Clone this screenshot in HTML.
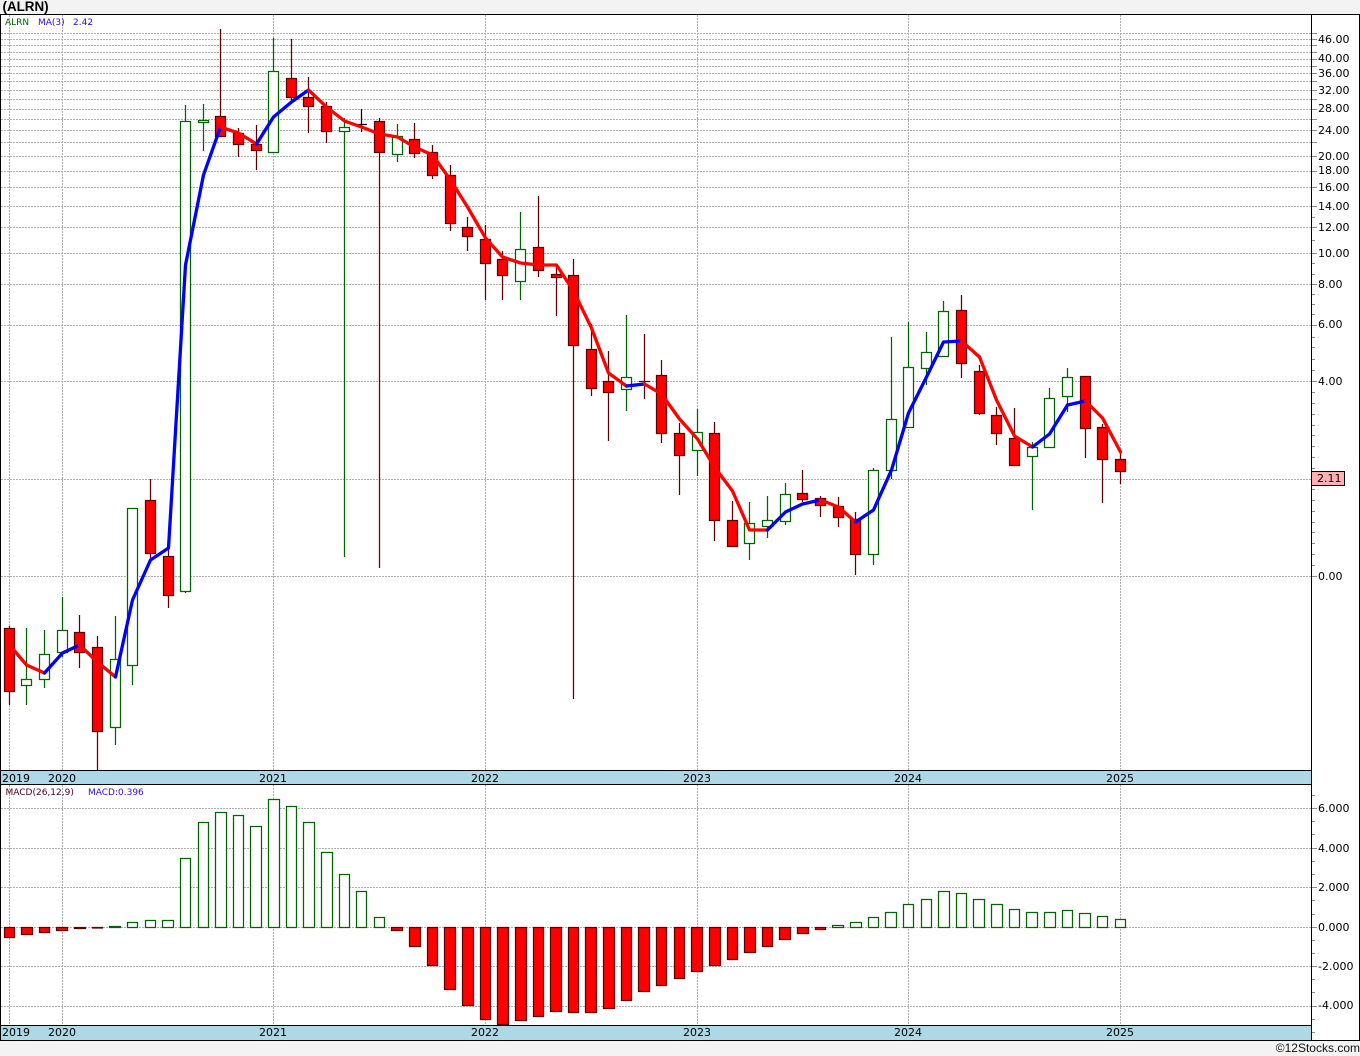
<!DOCTYPE html>
<html><head><meta charset="utf-8"><title>ALRN</title>
<style>
html,body{margin:0;padding:0;background:#f3f3f3}
svg{display:block}
text{font-family:"DejaVu Sans",sans-serif;font-size:11px;fill:#000}
.s text{font-size:9px}
.g{stroke:#b0b0b0;stroke-width:1;stroke-dasharray:2 1;fill:none}
.t{stroke:#8a8a8a;stroke-width:1;fill:none}
.gw{stroke:#006400;stroke-width:1.25;fill:none}
.rw{stroke:#600000;stroke-width:1.25;fill:none}
.gb rect{fill:#fff;stroke:#006400;stroke-width:1.25}
.rb rect{fill:#f00;stroke:#600000;stroke-width:1.25}
.ma{fill:none;stroke-width:3.3;stroke-linejoin:round;stroke-linecap:round}
</style></head><body>
<svg xmlns="http://www.w3.org/2000/svg" width="1360" height="1056" viewBox="0 0 1360 1056">
<rect width="1360" height="1056" fill="#f3f3f3"/>
<rect x="0" y="14" width="1360" height="1027" fill="#fff"/>
<text x="2.5" y="11" style="font:bold 13.4px 'Liberation Sans',sans-serif;fill:#000">(ALRN)</text>

<!-- horizontal grid top -->
<path class="g" d="M1 33.5H1311M1 39.5H1311M1 45.5H1311M1 52.5H1311M1 59.5H1311M1 66.5H1311M1 73.5H1311M1 81.5H1311M1 90.5H1311M1 99.5H1311M1 109.5H1311M1 119.5H1311M1 130.5H1311M1 142.5H1311M1 156.5H1311M1 171.5H1311M1 187.5H1311M1 206.5H1311M1 227.5H1311M1 253.5H1311M1 284.5H1311M1 325.5H1311M1 381.5H1311M1 479.5H1311M1 576.5H1311"/>
<!-- vertical grid -->
<path class="g" d="M9.5 15V770M62.5 15V770M273.5 15V770M485.5 15V770M697.5 15V770M908.5 15V770M1120.5 15V770M9.5 785V1025M62.5 785V1025M273.5 785V1025M485.5 785V1025M697.5 785V1025M908.5 785V1025M1120.5 785V1025"/>
<!-- macd grid -->
<path class="g" d="M1 808.5H1311M1 848.5H1311M1 887.5H1311M1 927.5H1311M1 966.5H1311M1 1006.5H1311"/>

<!-- axis ticks -->
<path class="t" d="M1312 33.5H1317M1312 39.5H1317M1312 45.5H1317M1312 52.5H1317M1312 59.5H1317M1312 66.5H1317M1312 73.5H1317M1312 81.5H1317M1312 90.5H1317M1312 99.5H1317M1312 109.5H1317M1312 119.5H1317M1312 130.5H1317M1312 142.5H1317M1312 156.5H1317M1312 171.5H1317M1312 187.5H1317M1312 206.5H1317M1312 227.5H1317M1312 253.5H1317M1312 284.5H1317M1312 325.5H1317M1312 381.5H1317M1312 576.5H1317
M1312 217.5H1315M1312 240.5H1315M1312 263.5H1315M1312 274.5H1315M1312 294.5H1315M1312 304.5H1315M1312 314.5H1315M1312 337.5H1315M1312 347.5H1315M1312 359.5H1315M1312 370.5H1315M1312 392.5H1315M1312 403.5H1315M1312 414.5H1315M1312 425.5H1315M1312 435.5H1315M1312 446.5H1315M1312 457.5H1315M1312 468.5H1315M1312 489.5H1315M1312 500.5H1315M1312 511.5H1315M1312 522.5H1315M1312 532.5H1315M1312 543.5H1315M1312 554.5H1315M1312 565.5H1315
M1312 808.5H1317M1312 848.5H1317M1312 887.5H1317M1312 927.5H1317M1312 966.5H1317M1312 1006.5H1317
M1312 795.5H1315M1312 821.5H1315M1312 834.5H1315M1312 861.5H1315M1312 874.5H1315M1312 900.5H1315M1312 914.5H1315M1312 940.5H1315M1312 953.5H1315M1312 979.5H1315M1312 992.5H1315M1312 1019.5H1315M1312 1032.5H1315"/>

<!-- wicks -->
<path class="gw" d="M26.5 628V705M44.5 630V688M62.5 597V657M115.5 616V745M132.5 508V685M185.5 105V593M203.5 104V151M273.5 38V153M344.5 118V557M397.5 124V162M520.5 212V300M626.5 315V411M697.5 409V476M749.5 502V560M767.5 496V538M785.5 483V525M873.5 468V565M891.5 337V479M908.5 322V427M926.5 332V385M943.5 301V356M1032.5 442V510M1049.5 388V447M1067.5 368V412"/>
<path class="rw" d="M9.5 626V705M79.5 615V668M97.5 636V770M150.5 479V558M168.5 548V608M220.5 29V137M238.5 128V157M256.5 125V170M291.5 39V102M308.5 77V133M326.5 102V143M379.5 118V568M414.5 123V158M432.5 145V179M450.5 165V231M467.5 217V251M485.5 225V300M502.5 251V300M538.5 196V277M556.5 267V316M573.5 259V699M591.5 324V396M608.5 351V441M644.5 334V399M639 381.5H650M661.5 360V443M679.5 423V495M714.5 422V541M732.5 501V546M802.5 470V502M820.5 496V517M838.5 497V527M855.5 512V575M961.5 295V378M979.5 365V415M996.5 407V445M1014.5 408V465M1085.5 376V458M1102.5 424V503M1120.5 452V484"/>
<path d="M361.5 109V132M356 124.5H367" stroke="#000" stroke-width="1.25" fill="none"/>

<!-- green bodies -->
<g class="gb">
<rect x="21.5" y="679.5" width="10" height="6"/>
<rect x="39.5" y="654.5" width="10" height="25"/>
<rect x="57.5" y="630.5" width="10" height="22"/>
<rect x="110.5" y="659.5" width="10" height="68"/>
<rect x="127.5" y="508.5" width="10" height="157"/>
<rect x="180.5" y="121.5" width="10" height="470"/>
<rect x="198.5" y="120.5" width="10" height="2"/>
<rect x="268.5" y="71.5" width="10" height="81"/>
<rect x="339.5" y="127.5" width="10" height="4"/>
<rect x="392.5" y="136.5" width="10" height="18"/>
<rect x="515.5" y="249.5" width="10" height="32"/>
<rect x="621.5" y="377.5" width="10" height="12"/>
<rect x="692.5" y="432.5" width="10" height="18"/>
<rect x="744.5" y="523.5" width="10" height="20"/>
<rect x="762.5" y="520.5" width="10" height="6"/>
<rect x="780.5" y="494.5" width="10" height="27"/>
<rect x="868.5" y="470.5" width="10" height="84"/>
<rect x="886.5" y="419.5" width="10" height="51"/>
<rect x="903.5" y="367.5" width="10" height="60"/>
<rect x="921.5" y="352.5" width="10" height="16"/>
<rect x="938.5" y="311.5" width="10" height="45"/>
<rect x="1027.5" y="447.5" width="10" height="9"/>
<rect x="1044.5" y="398.5" width="10" height="49"/>
<rect x="1062.5" y="377.5" width="10" height="19"/>
</g>
<!-- red bodies -->
<g class="rb">
<rect x="4.5" y="628.5" width="10" height="63"/>
<rect x="74.5" y="632.5" width="10" height="20"/>
<rect x="92.5" y="647.5" width="10" height="84"/>
<rect x="145.5" y="500.5" width="10" height="53"/>
<rect x="163.5" y="556.5" width="10" height="39"/>
<rect x="215.5" y="116.5" width="10" height="20"/>
<rect x="233.5" y="133.5" width="10" height="11"/>
<rect x="251.5" y="144.5" width="10" height="6"/>
<rect x="286.5" y="78.5" width="10" height="19"/>
<rect x="303.5" y="97.5" width="10" height="9"/>
<rect x="321.5" y="106.5" width="10" height="25"/>
<rect x="374.5" y="121.5" width="10" height="31"/>
<rect x="409.5" y="139.5" width="10" height="14"/>
<rect x="427.5" y="152.5" width="10" height="23"/>
<rect x="445.5" y="175.5" width="10" height="48"/>
<rect x="462.5" y="227.5" width="10" height="9"/>
<rect x="480.5" y="239.5" width="10" height="24"/>
<rect x="497.5" y="259.5" width="10" height="16"/>
<rect x="533.5" y="247.5" width="10" height="23"/>
<rect x="551.5" y="274.5" width="10" height="3"/>
<rect x="568.5" y="275.5" width="10" height="70"/>
<rect x="586.5" y="349.5" width="10" height="39"/>
<rect x="603.5" y="381.5" width="10" height="11"/>
<rect x="656.5" y="375.5" width="10" height="58"/>
<rect x="674.5" y="433.5" width="10" height="22"/>
<rect x="709.5" y="433.5" width="10" height="87"/>
<rect x="727.5" y="520.5" width="10" height="26"/>
<rect x="797.5" y="493.5" width="10" height="6"/>
<rect x="815.5" y="498.5" width="10" height="7"/>
<rect x="833.5" y="506.5" width="10" height="11"/>
<rect x="850.5" y="519.5" width="10" height="35"/>
<rect x="956.5" y="310.5" width="10" height="53"/>
<rect x="974.5" y="371.5" width="10" height="42"/>
<rect x="991.5" y="415.5" width="10" height="18"/>
<rect x="1009.5" y="438.5" width="10" height="27"/>
<rect x="1080.5" y="376.5" width="10" height="52"/>
<rect x="1097.5" y="427.5" width="10" height="32"/>
<rect x="1115.5" y="459.5" width="10" height="12"/>
</g>

<!-- moving average -->
<g class="ma">
<polyline stroke="#ff0000" points="9.5,645 26.5,665 44.5,673"/>
<polyline stroke="#0000ff" points="44.5,673 62.5,653 79.5,645"/>
<polyline stroke="#ff0000" points="79.5,645 97.5,662 115.5,677"/>
<polyline stroke="#0000ff" points="115.5,677 132.5,600 150.5,560 168.5,548 185.5,265 203.5,175 220.5,127"/>
<polyline stroke="#ff0000" points="220.5,127 238.5,133 256.5,144"/>
<polyline stroke="#0000ff" points="256.5,144 273.5,117 291.5,102 308.5,90"/>
<polyline stroke="#ff0000" points="308.5,90 326.5,107 344.5,121 361.5,127 379.5,134 397.5,137 414.5,147 432.5,155 450.5,180 467.5,207 485.5,238 502.5,257 520.5,263 538.5,265 556.5,265 573.5,291 591.5,328 608.5,373 626.5,386"/>
<polyline stroke="#0000ff" points="626.5,386 644.5,384"/>
<polyline stroke="#ff0000" points="644.5,384 661.5,394 679.5,419 697.5,439 714.5,467 732.5,491 749.5,530 767.5,530"/>
<polyline stroke="#0000ff" points="767.5,530 785.5,512 802.5,504 820.5,500"/>
<polyline stroke="#ff0000" points="820.5,500 838.5,507 855.5,522"/>
<polyline stroke="#0000ff" points="855.5,522 873.5,510 891.5,470 908.5,413 926.5,377 943.5,342 961.5,341"/>
<polyline stroke="#ff0000" points="961.5,341 979.5,357 996.5,400 1014.5,436 1032.5,447"/>
<polyline stroke="#0000ff" points="1032.5,447 1049.5,434 1067.5,405 1085.5,401"/>
<polyline stroke="#ff0000" points="1085.5,401 1102.5,418 1120.5,452"/>
</g>

<!-- MACD green -->
<g class="gb">
<rect x="109.5" y="926.5" width="11" height="1"/>
<rect x="127.5" y="922.5" width="10" height="5"/>
<rect x="145.5" y="920.5" width="10" height="7"/>
<rect x="162.5" y="920.5" width="11" height="7"/>
<rect x="180.5" y="858.5" width="10" height="69"/>
<rect x="198.5" y="822.5" width="10" height="105"/>
<rect x="215.5" y="812.5" width="11" height="115"/>
<rect x="233.5" y="815.5" width="10" height="112"/>
<rect x="250.5" y="826.5" width="11" height="101"/>
<rect x="268.5" y="799.5" width="11" height="128"/>
<rect x="286.5" y="806.5" width="10" height="121"/>
<rect x="303.5" y="822.5" width="11" height="105"/>
<rect x="321.5" y="852.5" width="11" height="75"/>
<rect x="339.5" y="874.5" width="10" height="53"/>
<rect x="356.5" y="891.5" width="10" height="36"/>
<rect x="374.5" y="917.5" width="10" height="10"/>
<rect x="832.5" y="925.5" width="11" height="2"/>
<rect x="850.5" y="922.5" width="11" height="5"/>
<rect x="868.5" y="917.5" width="10" height="10"/>
<rect x="885.5" y="912.5" width="11" height="15"/>
<rect x="903.5" y="904.5" width="10" height="23"/>
<rect x="921.5" y="899.5" width="10" height="28"/>
<rect x="938.5" y="891.5" width="11" height="36"/>
<rect x="956.5" y="893.5" width="10" height="34"/>
<rect x="973.5" y="899.5" width="11" height="28"/>
<rect x="991.5" y="904.5" width="11" height="23"/>
<rect x="1009.5" y="909.5" width="10" height="18"/>
<rect x="1026.5" y="912.5" width="11" height="15"/>
<rect x="1044.5" y="912.5" width="11" height="15"/>
<rect x="1062.5" y="910.5" width="10" height="17"/>
<rect x="1079.5" y="913.5" width="11" height="14"/>
<rect x="1097.5" y="916.5" width="10" height="11"/>
<rect x="1115.5" y="919.5" width="10" height="8"/>
</g>
<!-- MACD red -->
<g class="rb">
<rect x="4.5" y="927.5" width="10" height="10"/>
<rect x="21.5" y="927.5" width="11" height="7"/>
<rect x="39.5" y="927.5" width="10" height="5"/>
<rect x="56.5" y="927.5" width="11" height="3"/>
<rect x="74.5" y="927.5" width="11" height="1"/>
<rect x="92.5" y="927.5" width="10" height="0.5"/>
<rect x="391.5" y="927.5" width="11" height="3"/>
<rect x="409.5" y="927.5" width="11" height="19"/>
<rect x="427.5" y="927.5" width="10" height="38"/>
<rect x="444.5" y="927.5" width="11" height="62"/>
<rect x="462.5" y="927.5" width="11" height="78"/>
<rect x="480.5" y="927.5" width="10" height="92"/>
<rect x="497.5" y="927.5" width="11" height="97"/>
<rect x="515.5" y="927.5" width="11" height="93"/>
<rect x="533.5" y="927.5" width="10" height="89"/>
<rect x="550.5" y="927.5" width="11" height="84"/>
<rect x="568.5" y="927.5" width="10" height="85"/>
<rect x="585.5" y="927.5" width="11" height="85"/>
<rect x="603.5" y="927.5" width="11" height="81"/>
<rect x="621.5" y="927.5" width="10" height="73"/>
<rect x="638.5" y="927.5" width="11" height="64"/>
<rect x="656.5" y="927.5" width="10" height="58"/>
<rect x="674.5" y="927.5" width="10" height="51"/>
<rect x="691.5" y="927.5" width="11" height="44"/>
<rect x="709.5" y="927.5" width="11" height="38"/>
<rect x="727.5" y="927.5" width="10" height="32"/>
<rect x="744.5" y="927.5" width="11" height="25"/>
<rect x="762.5" y="927.5" width="10" height="19"/>
<rect x="779.5" y="927.5" width="11" height="12"/>
<rect x="797.5" y="927.5" width="11" height="6"/>
<rect x="815.5" y="927.5" width="10" height="2"/>
</g>

<!-- time bars -->
<rect x="1" y="770.5" width="1310" height="13.5" fill="#add8e6"/>
<rect x="1" y="1025.5" width="1310" height="14.5" fill="#add8e6"/>
<path stroke="#000" fill="none" d="M0 770.5H1311M0 784.5H1311M0 1025.5H1311M0 14.5H1360M0 1040.5H1360M0.5 14V1041M1311.5 14V1041M1359.5 14V1041"/>

<text x="2" y="782">2019</text><text x="62" y="782" text-anchor="middle">2020</text><text x="273" y="782" text-anchor="middle">2021</text><text x="485" y="782" text-anchor="middle">2022</text><text x="697" y="782" text-anchor="middle">2023</text><text x="908" y="782" text-anchor="middle">2024</text><text x="1120" y="782" text-anchor="middle">2025</text>
<text x="2" y="1036">2019</text><text x="62" y="1036" text-anchor="middle">2020</text><text x="273" y="1036" text-anchor="middle">2021</text><text x="485" y="1036" text-anchor="middle">2022</text><text x="697" y="1036" text-anchor="middle">2023</text><text x="908" y="1036" text-anchor="middle">2024</text><text x="1120" y="1036" text-anchor="middle">2025</text>

<!-- legends -->
<g class="s">
<text x="5" y="25" style="fill:#006400">ALRN</text>
<text x="38" y="25" style="fill:#2a10e0">MA(3)</text>
<text x="73" y="25" style="fill:#1818d0">2.42</text>
<text x="5.5" y="795" style="fill:#500020">MACD(26,12,9)</text>
<text x="88" y="795" style="fill:#2a10e0">MACD:0.396</text>
</g>

<!-- y labels -->
<text x="1318" y="43">46.00</text>
<text x="1318" y="62">40.00</text>
<text x="1318" y="77">36.00</text>
<text x="1318" y="94">32.00</text>
<text x="1318" y="112">28.00</text>
<text x="1318" y="134">24.00</text>
<text x="1318" y="160">20.00</text>
<text x="1318" y="174">18.00</text>
<text x="1318" y="191">16.00</text>
<text x="1318" y="210">14.00</text>
<text x="1318" y="231">12.00</text>
<text x="1318" y="257">10.00</text>
<text x="1318" y="288">8.00</text>
<text x="1318" y="328">6.00</text>
<text x="1318" y="385">4.00</text>
<text x="1318" y="580">0.00</text>
<rect x="1311.5" y="471.5" width="33" height="14" fill="#ffb0b0" stroke="#000"/>
<text x="1317" y="482">2.11</text>

<text x="1318" y="812">6.000</text>
<text x="1318" y="852">4.000</text>
<text x="1318" y="891">2.000</text>
<text x="1318" y="931">0.000</text>
<text x="1318" y="970">-2.000</text>
<text x="1318" y="1009">-4.000</text>

<text x="1360" y="1052" text-anchor="end" style="font:12px 'Liberation Sans',sans-serif;fill:#111">©12Stocks.com</text>
</svg>
</body></html>
